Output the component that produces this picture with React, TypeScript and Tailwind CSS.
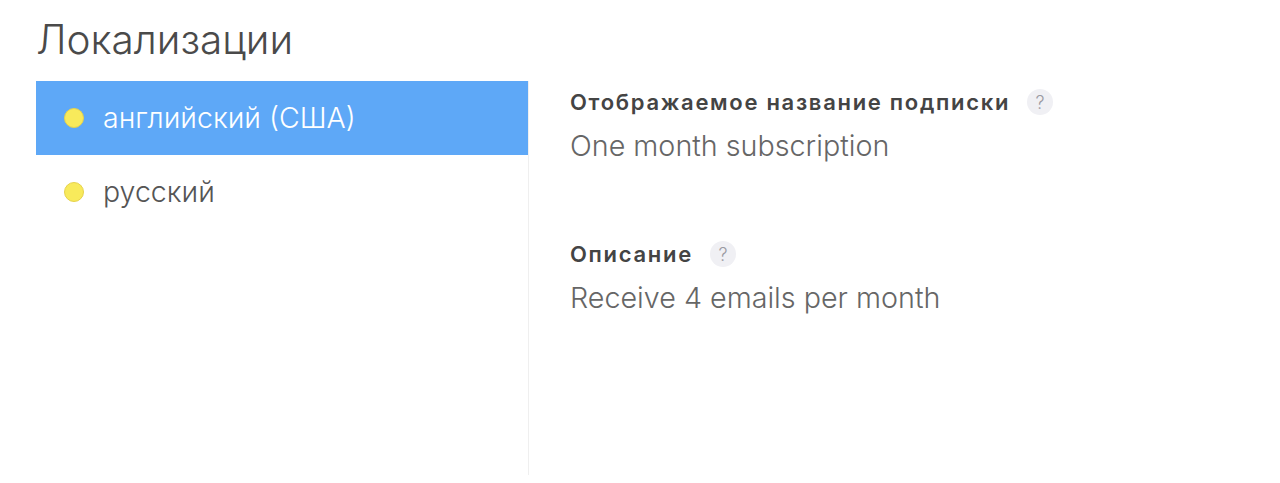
import React from "react";

const locales = [
  { name: "английский (США)", active: true },
  { name: "русский", active: false },
];

const fields = [
  { label: "Отображаемое название подписки", value: "One month subscription" },
  { label: "Описание", value: "Receive 4 emails per month" },
];

const HelpBadge = () => (
  <span className="ml-[17px] flex h-[26px] w-[26px] items-center justify-center rounded-full bg-[#f0f0f4] text-[18px] font-light text-[#9a9aa2]">
    ?
  </span>
);

const App = () => {
  return (
    <div className="h-[483px] w-[1280px] bg-white pl-9 font-['Inter',sans-serif]">
      {/* title */}
      <h1 className="pt-[15px] text-[40.5px] leading-[50px] font-light text-[#4a4a4a]">
        Локализации
      </h1>

      <div className="mt-4 flex">
        {/* locales list */}
        <div className="h-[394px] w-[493px] border-r border-[#efefef]">
          {locales.map((l) => (
            <div
              key={l.name}
              className={`flex h-[74px] items-center pl-[28px] ${
                l.active ? "bg-[#5ea8f7] text-white" : "text-[#555]"
              }`}
            >
              <span className="h-[20px] w-[20px] rounded-full border border-[#e6d24c] bg-[#f8ea5b]" />
              <span className="ml-[19px] text-[28.5px] font-light">{l.name}</span>
            </div>
          ))}
        </div>

        {/* fields */}
        <div className="flex flex-col gap-[79px] pt-[6px] pl-[41px]">
          {fields.map((f) => (
            <div key={f.label}>
              <div className="flex h-[30px] items-center">
                <span className="text-[22px] font-semibold tracking-[1.7px] text-[#444]">
                  {f.label}
                </span>
                <HelpBadge />
              </div>
              <div className="mt-[15px] text-[28.7px] leading-[28px] font-light text-[#666]">
                {f.value}
              </div>
            </div>
          ))}
        </div>
      </div>
    </div>
  );
};

export default App;
